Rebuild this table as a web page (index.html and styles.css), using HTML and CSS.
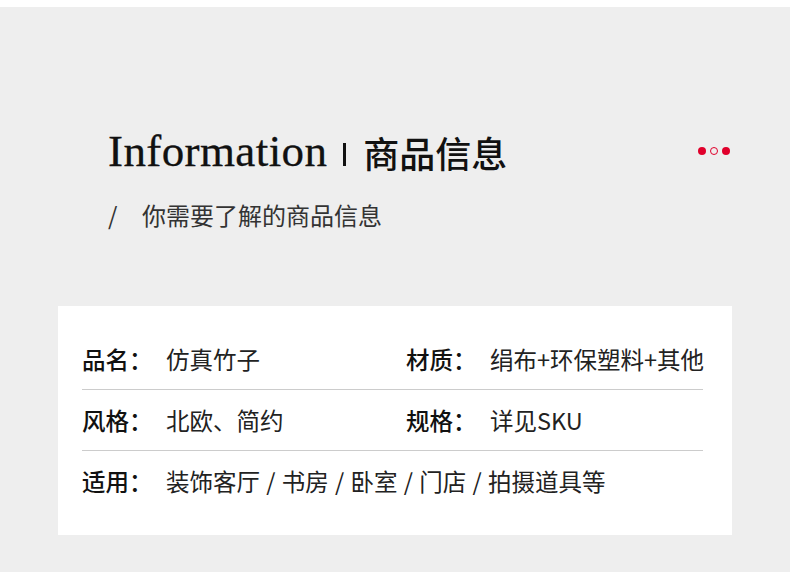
FILE: index.html
```html
<!DOCTYPE html>
<html lang="zh">
<head>
<meta charset="utf-8">
<link rel="stylesheet" href="styles.css">
</head>
<body>
<div class="page">
  <header class="head">
    <h1 class="title"><span class="en">Information</span><span class="bar"></span><span class="cn">商品信息</span></h1>
    <div class="dots"><span class="dot"></span><span class="dot hollow"></span><span class="dot"></span></div>
  </header>
  <p class="sub"><span class="slash">/</span><span>你需要了解的商品信息</span></p>
  <section class="card">
    <div class="row">
      <div class="cell"><span class="label">品名：</span><span class="val">仿真竹子</span></div>
      <div class="cell"><span class="label">材质：</span><span class="val">绢布+环保塑料+其他</span></div>
    </div>
    <div class="row">
      <div class="cell"><span class="label">风格：</span><span class="val">北欧、简约</span></div>
      <div class="cell"><span class="label">规格：</span><span class="val">详见SKU</span></div>
    </div>
    <div class="row last">
      <div class="cell wide"><span class="label">适用：</span><span class="val">装饰客厅 / 书房 / 卧室 / 门店 / 拍摄道具等</span></div>
    </div>
  </section>
</div>
</body>
</html>
```
FILE: styles.css
```css
html, body {
  margin: 0;
  padding: 0;
  background: #ffffff;
}
.page {
  margin-top: 7px;
  width: 790px;
  height: 565px;
  background: #eeeeee;
  box-sizing: border-box;
  padding-top: 119px;
  font-family: "Noto Sans CJK SC", sans-serif;
  color: #1a1a1a;
}
.head {
  display: flex;
  align-items: center;
  justify-content: space-between;
  padding: 0 60px 0 108px;
  height: 50px;
}
.title {
  margin: 0;
  display: flex;
  align-items: center;
  font-weight: normal;
  color: #111;
}
.en {
  font-family: "Liberation Serif", "Times New Roman", serif;
  font-size: 45px;
  letter-spacing: 0.4px;
  -webkit-text-stroke: 0.3px #111;
}
.bar {
  width: 3px;
  height: 23px;
  background: #111;
  margin: 7px 17px 0 16px;
}
.cn {
  font-family: "Noto Sans CJK SC", sans-serif;
  font-weight: 500;
  font-size: 36px;
  margin-top: 2px;
}
.dots {
  display: flex;
  gap: 4px;
  align-items: center;
}
.dot {
  width: 8px;
  height: 8px;
  border-radius: 50%;
  background: #e0002b;
  box-sizing: border-box;
}
.dot.hollow {
  background: transparent;
  border: 1.5px solid #e0002b;
}
.sub {
  margin: 23px 0 0 108px;
  font-size: 24px;
  line-height: 32px;
  color: #333;
  display: flex;
}
.slash {
  width: 34px;
  font-family: "Noto Sans CJK SC", sans-serif;
}
.card {
  margin: 75px 0 0 58px;
  width: 674px;
  height: 229px;
  background: #ffffff;
  box-sizing: border-box;
  padding: 23px 29px 0 24px;
}
.row {
  display: flex;
  height: 60px;
  align-items: center;
  border-bottom: 1px solid #cccccc;
}
.row.last {
  border-bottom: none;
}
.cell {
  display: flex;
  flex: none;
  width: 324px;
  font-size: 23.5px;
  line-height: 30px;
}
.cell.wide {
  width: auto;
}
.label {
  width: 84px;
  font-weight: 500;
  color: #111;
}
.val {
  color: #222;
  white-space: nowrap;
}
.wide .val {
  word-spacing: 1px;
}
```
